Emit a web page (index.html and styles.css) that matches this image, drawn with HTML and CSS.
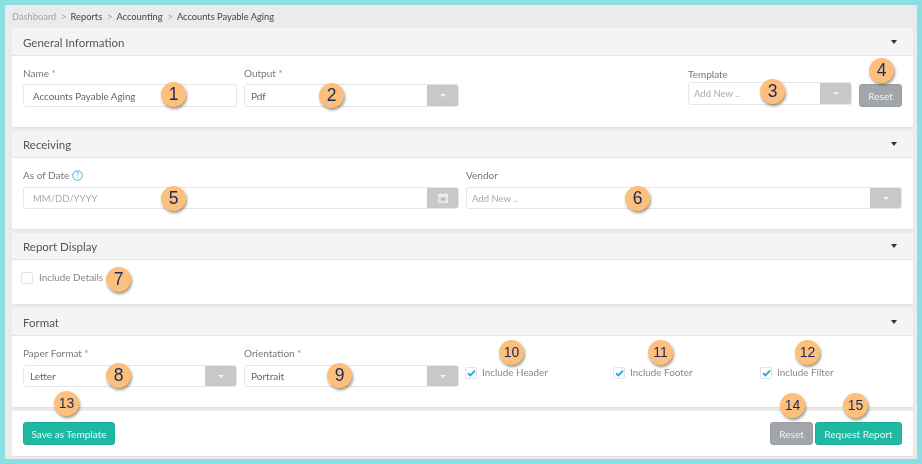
FILE: index.html
```html
<!DOCTYPE html>
<html lang="en">
<head>
    <meta charset="UTF-8">
    <title>Accounts Payable Aging</title>
    <link rel="stylesheet" href="styles.css">
</head>
<body>
<div class="frame">
    <div class="breadcrumb">
        <span class="crumb-home">Dashboard</span><span class="sep">&gt;</span><span>Reports</span><span class="sep">&gt;</span><span>Accounting</span><span class="sep">&gt;</span><span>Accounts Payable Aging</span>
    </div>

    <section class="panel">
        <div class="panel-head"><h2>General Information</h2><span class="head-caret"></span></div>
        <div class="panel-body body-general">
            <div class="field w-left">
                <label>Name <em>*</em></label>
                <div class="input"><span class="value indent">Accounts Payable Aging</span></div>
            </div>
            <div class="field w-mid">
                <label>Output <em>*</em></label>
                <div class="input"><span class="value">Pdf</span><span class="addon"><i class="caret"></i></span></div>
            </div>
            <div class="field field-template">
                <label>Template</label>
                <div class="input"><span class="value muted">Add New ..</span><span class="addon"><i class="caret"></i></span></div>
            </div>
            <button class="btn btn-grey btn-top">Reset</button>
        </div>
    </section>

    <section class="panel">
        <div class="panel-head head-short"><h2>Receiving</h2><span class="head-caret"></span></div>
        <div class="panel-body body-receiving">
            <div class="field w-half">
                <label>As of Date
                    <svg class="help" width="11" height="11" viewBox="0 0 11 11"><circle cx="5.5" cy="5.5" r="4.8" fill="none" stroke="#45b4d8"/><text x="5.5" y="8.3" text-anchor="middle" class="help-mark">?</text></svg>
                </label>
                <div class="input"><span class="value indent muted">MM/DD/YYYY</span>
                    <span class="addon">
                        <svg width="10" height="10" viewBox="0 0 10 10"><path fill="#eee" d="M0 1h10v9H0z"/><rect x="1" y="3.5" width="8" height="5.5" fill="#dcdcdc"/><rect x="3" y="5" width="4" height="2.5" fill="#bbb"/><rect x="2" y="0" width="1" height="2" fill="#eee"/><rect x="7" y="0" width="1" height="2" fill="#eee"/></svg>
                    </span>
                </div>
            </div>
            <div class="field w-half">
                <label>Vendor</label>
                <div class="input"><span class="value muted">Add New ..</span><span class="addon"><i class="caret"></i></span></div>
            </div>
        </div>
    </section>

    <section class="panel">
        <div class="panel-head head-short"><h2>Report Display</h2><span class="head-caret"></span></div>
        <div class="panel-body body-display">
            <div class="check"><span class="box box-plain"></span>Include Details</div>
        </div>
    </section>

    <section class="panel">
        <div class="panel-head"><h2>Format</h2><span class="head-caret"></span></div>
        <div class="panel-body body-format">
            <div class="field w-left">
                <label>Paper Format <em>*</em></label>
                <div class="input"><span class="value">Letter</span><span class="addon"><i class="caret"></i></span></div>
            </div>
            <div class="field w-mid">
                <label>Orientation <em>*</em></label>
                <div class="input"><span class="value">Portrait</span><span class="addon"><i class="caret"></i></span></div>
            </div>
            <div class="checks">
                <div class="check"><span class="box"><svg width="9" height="8" viewBox="0 0 9 8"><path d="M1 4.2 3.4 6.4 8 1.6" fill="none" stroke="#1fb0dc" stroke-width="2"/></svg></span>Include Header</div>
                <div class="check"><span class="box"><svg width="9" height="8" viewBox="0 0 9 8"><path d="M1 4.2 3.4 6.4 8 1.6" fill="none" stroke="#1fb0dc" stroke-width="2"/></svg></span>Include Footer</div>
                <div class="check"><span class="box"><svg width="9" height="8" viewBox="0 0 9 8"><path d="M1 4.2 3.4 6.4 8 1.6" fill="none" stroke="#1fb0dc" stroke-width="2"/></svg></span>Include Filter</div>
            </div>
        </div>
    </section>

    <section class="panel panel-actions">
        <button class="btn btn-teal btn-save">Save as Template</button>
        <div class="actions-right">
            <button class="btn btn-grey">Reset</button>
            <button class="btn btn-teal btn-request">Request Report</button>
        </div>
    </section>

    <!-- numbered callouts sit on top of the form -->
    <span class="badge b1">1</span>
    <span class="badge b2">2</span>
    <span class="badge b3">3</span>
    <span class="badge b4">4</span>
    <span class="badge b5">5</span>
    <span class="badge b6">6</span>
    <span class="badge b7">7</span>
    <span class="badge b8">8</span>
    <span class="badge b9">9</span>
    <span class="badge b10">10</span>
    <span class="badge b11">11</span>
    <span class="badge b12">12</span>
    <span class="badge b13">13</span>
    <span class="badge b14">14</span>
    <span class="badge b15">15</span>
</div>
</body>
</html>
```

FILE: styles.css
```css
* { box-sizing: border-box; }
html, body { margin: 0; padding: 0; }
body { font-family: Lato, "Open Sans", sans-serif; font-size: 10px; color: #666; }

.frame { position: relative; width: 922px; height: 464px; border: 5px solid #8adfe2; background: #ebebeb; padding: 0 4px 0 7px; overflow: hidden; filter: blur(0.35px); }

.breadcrumb { height: 23px; display: flex; align-items: center; font-size: 9.3px; color: #444; padding-bottom: 1px; }
.crumb-home { color: #a3a3a3; }
.sep { color: #999; margin: 0 4px 0 5px; font-size: 9px; }

.panel { background: #fff; border-radius: 2px; margin-bottom: 4px; box-shadow: 0 1px 1px #e2e2e2; }
.panel-head { height: 28px; background: #f4f4f4; border-bottom: 1px solid #e4e4e4; display: flex; align-items: center; justify-content: space-between; padding: 1px 11px 0; border-radius: 2px 2px 0 0; }
.head-short { height: 27px; padding-top: 0; }
.panel-head h2 { margin: 0; font-size: 11.5px; font-weight: 400; color: #555; }
.head-caret { width: 0; height: 0; border-left: 3px solid transparent; border-right: 3px solid transparent; border-top: 4px solid #333; margin-right: 5px; }

.panel-body { display: flex; padding: 11px 11px 0; height: 71px; }
.body-receiving { gap: 7px; }
.body-display { height: 44px; padding: 12px 9px 0; }

.field { display: flex; flex-direction: column; flex: none; }
.field label { height: 18px; line-height: 12px; font-size: 10px; color: #777; }
.field label em { color: #e4605a; font-style: normal; font-size: 9px; }
.body-general .field label { height: 17px; }
.w-left { width: 214px; margin-right: 7px; }
.w-mid { width: 215px; }
.w-half { width: 436px; }
.body-general .field-template { width: 164px; margin-left: auto; margin-top: -3px; }
.body-general .field-template label { height: 15px; margin-top: 3px; line-height: 14px; }

.input { height: 22px; display: flex; align-items: center; border: 1px solid #e6e6e6; border-radius: 3px; background: #fff; overflow: hidden; }
.body-general .input { height: 23px; }
.value { flex: 1; padding-left: 6px; font-size: 10px; color: #666; }
.value.indent { padding-left: 9px; font-size: 9.8px; }
.value.muted { color: #aaa; font-size: 9.5px; padding-left: 5px; }
.value.indent.muted { padding-left: 9px; }
.addon { width: 32px; align-self: stretch; margin: -1px -1px -1px 0; background: #c8c8c8; display: flex; align-items: center; justify-content: center; }
.caret { width: 0; height: 0; border-left: 3px solid transparent; border-right: 3px solid transparent; border-top: 3px solid #f4f4f4; }

.help { vertical-align: -2px; }
.help-mark { font-size: 8px; fill: #45b4d8; font-family: Lato, sans-serif; }

.btn { height: 23px; border: 1px solid transparent; border-radius: 3px; color: #f2f2f2; font-family: Lato, sans-serif; font-size: 10.1px; padding: 0; }
.btn-grey { width: 43px; background: #a2a6aa; border-color: #999da1; }
.btn-teal { background: #1fb9a3; border-color: #1cab97; }
.btn-top { margin-left: 7px; margin-top: 17px; }
.btn-save { width: 92px; }
.btn-request { width: 87px; }

.check { display: flex; align-items: flex-start; font-size: 9.9px; line-height: 10px; color: #888; }
.box { width: 12px; height: 12px; border: 1px solid #e4e4e4; border-radius: 2px; margin-right: 5px; background: #fff; display: flex; align-items: center; justify-content: center; }
.box-plain { margin-right: 6px; }
.checks { display: grid; grid-template-columns: 148px 147px auto; flex: 1; margin-left: 6px; padding-top: 20px; align-items: start; }

.panel-actions { height: 45px; display: flex; align-items: center; justify-content: space-between; padding: 0 11px; margin-bottom: 0; }
.actions-right { display: flex; gap: 2px; }

.badge { position: absolute; width: 25px; height: 25px; border-radius: 50%; background: #fdc07c; color: #1b2a5c; font-family: "Liberation Sans", Arial, sans-serif; font-size: 17.5px; line-height: 25px; text-align: center; box-shadow: 1px 2px 3px rgba(80, 60, 20, 0.55); }
.b10, .b11, .b12, .b13, .b14, .b15 { font-size: 14px; }
.b1 { left: 156px; top: 77px; }
.b2 { left: 314px; top: 78px; }
.b3 { left: 755px; top: 74px; }
.b4 { left: 864px; top: 53px; }
.b5 { left: 156px; top: 181px; }
.b6 { left: 620px; top: 181px; }
.b7 { left: 101px; top: 262px; }
.b8 { left: 101px; top: 358px; }
.b9 { left: 322px; top: 358px; }
.b10 { left: 494px; top: 335px; }
.b11 { left: 643px; top: 335px; }
.b12 { left: 790px; top: 335px; }
.b13 { left: 49px; top: 386px; }
.b14 { left: 775px; top: 388px; }
.b15 { left: 838px; top: 388px; }
```
